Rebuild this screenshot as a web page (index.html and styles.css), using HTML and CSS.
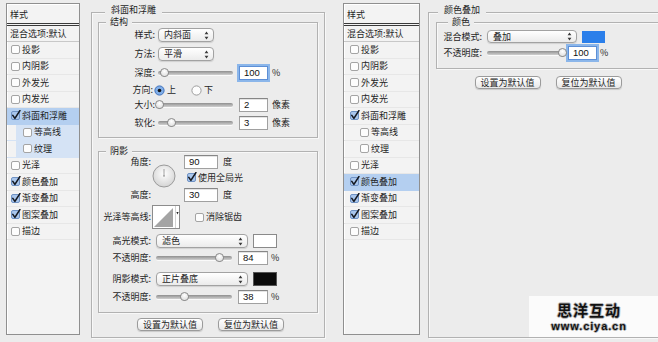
FILE: index.html
```html
<!DOCTYPE html>
<html>

<head>
    <meta charset="UTF-8">
    <link rel="stylesheet" href="styles.css">
    <title>图层样式</title>
</head>

<body>

    <!-- shared glyphs: checkboxes, radios, select arrows -->
    <svg class="defs" aria-hidden="true">
        <defs>
            <symbol id="cb-off" viewBox="0 0 11 11">
                <rect x="1.5" y="1.5" width="8" height="8" rx="1.5" fill="#fdfdfd" stroke="#a4a4a4" />
            </symbol>
            <symbol id="cb-on" viewBox="0 0 11 11">
                <rect x="1.5" y="1.5" width="8" height="8" rx="1.5" fill="#a9c6ec" stroke="#6f92c4" />
                <path d="M2.8 5.4 L4.9 8.4 L9.9 0.6" fill="none" stroke="#141820" stroke-width="1.6"
                    stroke-linecap="round" stroke-linejoin="round" />
            </symbol>
            <symbol id="radio-on" viewBox="0 0 11 11">
                <circle cx="5.5" cy="5.5" r="4.6" fill="#80aee8" stroke="#3e70bb" />
                <circle cx="5.5" cy="5.5" r="1.8" fill="#151515" />
            </symbol>
            <symbol id="radio-off" viewBox="0 0 11 11">
                <circle cx="5.5" cy="5.5" r="4.6" fill="#fdfdfd" stroke="#9d9d9d" />
            </symbol>
            <symbol id="updown" viewBox="0 0 5 9">
                <path d="M2.5 0.6 L4.4 3.3 H0.6 Z M2.5 8.4 L4.4 5.7 H0.6 Z" fill="#3a3a3a" />
            </symbol>
        </defs>
    </svg>

    <div class="window">

        <!-- left style list -->
        <div class="sidebar">
            <div class="side-head">样式</div>
            <div class="side-blend">混合选项:默认</div>
            <div class="side-row"><svg class="cb"><use href="#cb-off" /></svg>投影</div>
            <div class="side-row"><svg class="cb"><use href="#cb-off" /></svg>内阴影</div>
            <div class="side-row"><svg class="cb"><use href="#cb-off" /></svg>外发光</div>
            <div class="side-row"><svg class="cb"><use href="#cb-off" /></svg>内发光</div>
            <div class="side-row sel"><svg class="cb"><use href="#cb-on" /></svg>斜面和浮雕</div>
            <div class="side-row sub hl"><svg class="cb"><use href="#cb-off" /></svg>等高线</div>
            <div class="side-row sub hl"><svg class="cb"><use href="#cb-off" /></svg>纹理</div>
            <div class="side-row"><svg class="cb"><use href="#cb-off" /></svg>光泽</div>
            <div class="side-row"><svg class="cb"><use href="#cb-on" /></svg>颜色叠加</div>
            <div class="side-row"><svg class="cb"><use href="#cb-on" /></svg>渐变叠加</div>
            <div class="side-row"><svg class="cb"><use href="#cb-on" /></svg>图案叠加</div>
            <div class="side-row"><svg class="cb"><use href="#cb-off" /></svg>描边</div>
        </div>

        <!-- bevel and emboss -->
        <div class="panel">
            <div class="group outer">
                <div class="group-title">斜面和浮雕</div>

                <div class="group inner struct">
                    <div class="group-title">结构</div>
                    <div class="row r-style">
                        <span class="label">样式:</span>
                        <div class="select w56"><span>内斜面</span><svg class="arrows"><use href="#updown" /></svg></div>
                    </div>
                    <div class="row r-method">
                        <span class="label">方法:</span>
                        <div class="select w56"><span>平滑</span><svg class="arrows"><use href="#updown" /></svg></div>
                    </div>
                    <div class="row r-depth">
                        <span class="label">深度:</span>
                        <div class="slider"><span class="thumb" style="left: 9%"></span></div>
                        <span class="field focus">100</span>
                        <span class="unit">%</span>
                    </div>
                    <div class="row r-dir">
                        <span class="label">方向:</span>
                        <svg class="radio"><use href="#radio-on" /></svg>
                        <span class="radio-text">上</span>
                        <svg class="radio radio-gap"><use href="#radio-off" /></svg>
                        <span class="radio-text">下</span>
                    </div>
                    <div class="row r-size">
                        <span class="label">大小:</span>
                        <div class="slider"><span class="thumb" style="left: 2%"></span></div>
                        <span class="field">2</span>
                        <span class="unit">像素</span>
                    </div>
                    <div class="row r-soft">
                        <span class="label">软化:</span>
                        <div class="slider"><span class="thumb" style="left: 18%"></span></div>
                        <span class="field">3</span>
                        <span class="unit">像素</span>
                    </div>
                </div>

                <div class="group inner shade">
                    <div class="group-title">阴影</div>
                    <div class="angle">
                        <div class="angle-labels"><span>角度:</span><span>高度:</span></div>
                        <svg class="dial" viewBox="0 0 24 24">
                            <defs>
                                <radialGradient id="dialFill" cx="50%" cy="40%" r="60%">
                                    <stop offset="0" stop-color="#ffffff" />
                                    <stop offset="1" stop-color="#d4d4d4" />
                                </radialGradient>
                            </defs>
                            <circle cx="12" cy="12" r="11" fill="url(#dialFill)" stroke="#9a9a9a" />
                            <line x1="12" y1="12" x2="12" y2="5" stroke="#8a8a8a" stroke-width="0.8" />
                            <circle cx="12" cy="12" r="0.8" fill="#8a8a8a" />
                        </svg>
                        <div class="angle-fields">
                            <div class="row"><span class="field wide">90</span><span class="unit">度</span></div>
                            <div class="row check"><svg class="cb"><use href="#cb-on" /></svg>使用全局光</div>
                            <div class="row r-alt"><span class="field wide">30</span><span class="unit">度</span></div>
                        </div>
                    </div>
                    <div class="row r-contour">
                        <span class="label">光泽等高线:</span>
                        <svg class="contour" viewBox="0 0 28 24">
                            <rect x="0.5" y="0.5" width="27" height="23" fill="#fff" stroke="#8c8c8c" />
                            <path d="M2 22 L21 3 V22 Z" fill="#a4a4a4" />
                            <path d="M23.5 1 V23" stroke="#d2d2d2" />
                            <path d="M24.4 7 H26.6 L25.5 9.5 Z" fill="#222" />
                        </svg>
                        <svg class="cb cb-gap"><use href="#cb-off" /></svg>
                        <span>消除锯齿</span>
                    </div>
                    <div class="row r-mode">
                        <span class="label">高光模式:</span>
                        <div class="select w92"><span>滤色</span><svg class="arrows"><use href="#updown" /></svg></div>
                        <span class="swatch white"></span>
                    </div>
                    <div class="row r-op">
                        <span class="label">不透明度:</span>
                        <div class="slider"><span class="thumb" style="left: 84%"></span></div>
                        <span class="field">84</span>
                        <span class="unit">%</span>
                    </div>
                    <div class="row r-mode2">
                        <span class="label">阴影模式:</span>
                        <div class="select w92"><span>正片叠底</span><svg class="arrows"><use href="#updown" /></svg></div>
                        <span class="swatch black"></span>
                    </div>
                    <div class="row r-op2">
                        <span class="label">不透明度:</span>
                        <div class="slider"><span class="thumb" style="left: 38%"></span></div>
                        <span class="field">38</span>
                        <span class="unit">%</span>
                    </div>
                </div>

                <div class="buttons buttons-a">
                    <span class="btn">设置为默认值</span>
                    <span class="btn">复位为默认值</span>
                </div>
            </div>
        </div>

        <!-- second style list -->
        <div class="sidebar sidebar-b">
            <div class="side-head">样式</div>
            <div class="side-blend">混合选项:默认</div>
            <div class="side-row"><svg class="cb"><use href="#cb-off" /></svg>投影</div>
            <div class="side-row"><svg class="cb"><use href="#cb-off" /></svg>内阴影</div>
            <div class="side-row"><svg class="cb"><use href="#cb-off" /></svg>外发光</div>
            <div class="side-row"><svg class="cb"><use href="#cb-off" /></svg>内发光</div>
            <div class="side-row"><svg class="cb"><use href="#cb-on" /></svg>斜面和浮雕</div>
            <div class="side-row sub"><svg class="cb"><use href="#cb-off" /></svg>等高线</div>
            <div class="side-row sub"><svg class="cb"><use href="#cb-off" /></svg>纹理</div>
            <div class="side-row"><svg class="cb"><use href="#cb-off" /></svg>光泽</div>
            <div class="side-row sel"><svg class="cb"><use href="#cb-on" /></svg>颜色叠加</div>
            <div class="side-row"><svg class="cb"><use href="#cb-on" /></svg>渐变叠加</div>
            <div class="side-row"><svg class="cb"><use href="#cb-on" /></svg>图案叠加</div>
            <div class="side-row"><svg class="cb"><use href="#cb-off" /></svg>描边</div>
        </div>

        <!-- color overlay -->
        <div class="panel panel-b">
            <div class="group outer">
                <div class="group-title">颜色叠加</div>
                <div class="group inner color">
                    <div class="group-title">颜色</div>
                    <div class="row r-blend">
                        <span class="label">混合模式:</span>
                        <div class="select w90"><span>叠加</span><svg class="arrows"><use href="#updown" /></svg></div>
                        <span class="swatch blue"></span>
                    </div>
                    <div class="row r-cop">
                        <span class="label">不透明度:</span>
                        <div class="slider"><span class="thumb" style="left: 100%"></span></div>
                        <span class="field focus">100</span>
                        <span class="unit">%</span>
                    </div>
                </div>
                <div class="buttons buttons-b">
                    <span class="btn">设置为默认值</span>
                    <span class="btn">复位为默认值</span>
                </div>
            </div>
        </div>

    </div>

    <div class="watermark">
        <div class="wm-title">思洋互动</div>
        <div class="wm-url">www.ciya.cn</div>
    </div>

</body>

</html>
```

FILE: styles.css
```css
* {
    box-sizing: border-box;
}

body {
    margin: 0;
    width: 658px;
    height: 342px;
    overflow: hidden;
    position: relative;
    background: #ececec;
    color: #1f1f1f;
    font: 9px/14px "Noto Sans CJK SC", "Noto Sans CJK JP", sans-serif;
}

.defs {
    display: block;
    width: 0;
    height: 0;
    overflow: hidden;
}

.window {
    display: flex;
    align-items: flex-start;
    padding: 3px 0 0 6px;
}

/* style list */

.sidebar {
    flex: none;
    width: 74px;
    height: 332px;
    border: 1px solid #8f8f8f;
    background: #f3f3f3;
    box-shadow: inset 1px 1px 0 #fff;
}

.sidebar-b {
    width: 77px;
    margin-left: 18px;
}

.side-head {
    height: 22px;
    padding: 1px 0 0 3px;
    line-height: 19px;
    border-bottom: 3px double #3a3a3a;
}

.side-blend {
    height: 16px;
    padding-left: 3px;
    line-height: 15px;
    border-bottom: 1px solid #c8c8c8;
}

.side-row {
    height: 16.5px;
    display: flex;
    align-items: center;
    padding-left: 3px;
    border-bottom: 1px solid #e7e7e7;
}

.sidebar-b .side-row {
    padding-left: 5px;
}

.side-row.sub,
.sidebar-b .side-row.sub {
    padding-left: 15px;
}

.side-row.sel {
    background: #b4cff0;
    border-bottom-color: #b4cff0;
}

.side-row.hl {
    background: linear-gradient(90deg, transparent 9px, #d5e3f5 9px);
    border-bottom-color: #d5e3f5;
}

.cb {
    flex: none;
    width: 11px;
    height: 11px;
    margin-right: 1px;
}

/* group boxes */

.panel {
    flex: none;
    width: 234px;
    margin: 9px 0 0 11px;
}

.panel-b {
    width: 240px;
    margin-left: 8px;
}

.group {
    border: 1px solid #b2b2b2;
    box-shadow: inset 1px 1px 0 #f8f8f8, 1px 1px 0 #f8f8f8;
}

.outer {
    height: 326px;
}

.group-title {
    width: max-content;
    height: 11px;
    margin: -9px 0 0 13px;
    padding: 0 6px;
    background: #ececec;
    line-height: 11px;
}

.panel-b .outer > .group-title {
    margin-left: 9px;
}

.inner {
    margin: 7px 6px 0;
}

.inner > .group-title {
    margin-top: -7px;
    margin-left: 7px;
    padding: 0 4px;
}

.panel-b .inner {
    margin: 7px 6px 0 7px;
}

.panel-b .inner > .group-title {
    margin-left: 11px;
}

.struct {
    padding-bottom: 7px;
}

.shade {
    margin-top: 13px;
    padding-bottom: 8px;
}

.color {
    padding-bottom: 8px;
}

/* rows */

.row {
    display: flex;
    align-items: center;
    height: 14px;
    white-space: nowrap;
}

.label {
    flex: none;
    text-align: right;
    white-space: nowrap;
}

.struct .label {
    width: 56px;
    margin-right: 3px;
}

.shade .label {
    width: 52px;
    margin-right: 5px;
}

.color .label {
    width: 45px;
    margin-right: 5px;
}

.r-style {
    margin-top: 1px;
}

.r-method,
.r-depth {
    margin-top: 5px;
}

.r-dir {
    margin-top: 3px;
}

.r-dir .label {
    width: 54px;
    margin-right: 1px;
}

.r-size {
    margin-top: 1px;
}

.r-soft {
    margin-top: 4px;
}

.radio {
    flex: none;
    width: 11px;
    height: 11px;
}

.radio-text {
    margin-left: 2px;
}

.radio-gap {
    margin-left: 15px;
}

/* controls */

.select {
    flex: none;
    display: flex;
    align-items: center;
    justify-content: space-between;
    height: 14px;
    padding: 0 4px 0 5px;
    border: 1px solid #a2a2a2;
    border-radius: 4px;
    background: linear-gradient(#ffffff, #ebebeb);
    box-shadow: 0 1px 1px rgba(0, 0, 0, 0.12);
    line-height: 12px;
}

.w56 {
    width: 56px;
}

.w92 {
    width: 92px;
}

.w90 {
    width: 90px;
    height: 13px;
}

.arrows {
    width: 5px;
    height: 9px;
}

.slider {
    position: relative;
    flex: none;
    width: 75px;
    height: 4px;
    border-radius: 2px;
    background: linear-gradient(#8f8f8f, #d0d0d0);
    box-shadow: 0 1px 0 #fafafa;
}

.shade .slider {
    width: 76px;
}

.thumb {
    position: absolute;
    top: -3px;
    width: 9px;
    height: 9px;
    margin-left: -4.5px;
    border: 1px solid #8a8a8a;
    border-radius: 50% 50% 45% 45%;
    background: radial-gradient(circle at 50% 35%, #ffffff, #d8d8d8);
}

.field {
    flex: none;
    width: 29px;
    height: 14px;
    margin-left: 6px;
    padding-left: 4px;
    border: 1px solid #a0a0a0;
    border-top-color: #868686;
    background: #fff;
    box-shadow: inset 0 1px 0 #e4e4e4;
    color: #111;
    font: 9.5px/12px "Liberation Sans", Arial, sans-serif;
}

.shade .field {
    width: 30px;
}

.field.focus {
    border-color: #5d8fd6;
    box-shadow: 0 0 0 2px #8bb6ea;
}

.unit {
    margin-left: 4px;
}

.shade .unit,
.color .unit {
    margin-left: 3px;
}

.swatch {
    flex: none;
    width: 24px;
    height: 14px;
    margin-left: 5px;
    border: 1px solid #8a8a8a;
}

.swatch.white {
    background: #fff;
}

.swatch.black {
    background: #0b0b0b;
    border-color: #555;
}

.swatch.blue {
    width: 23px;
    height: 12px;
    background: #2b7fea;
    border-color: #2b7fea;
}

/* shadow group */

.angle {
    display: flex;
    height: 47px;
    margin-top: -1px;
}

.angle-labels {
    width: 52px;
    display: flex;
    flex-direction: column;
    justify-content: space-between;
    text-align: right;
}

.dial {
    flex: none;
    width: 24px;
    height: 24px;
    margin: 9px 0 0 1px;
}

.angle-fields {
    margin-left: 8px;
}

.angle-fields .field {
    margin-left: 0;
}

.field.wide {
    width: 34px;
}

.angle-fields .unit {
    margin-left: 5px;
}

.angle-fields .check {
    height: 13px;
    margin-top: 2px;
    padding-left: 2px;
}

.r-alt {
    margin-top: 4px;
}

.r-contour {
    height: 24px;
    margin-top: 3px;
}

.r-contour .label {
    margin-right: 1px;
}

.contour {
    flex: none;
    width: 28px;
    height: 24px;
}

.cb-gap {
    margin-left: 14px;
}

.r-mode {
    margin-top: 5px;
}

.r-op {
    margin-top: 3px;
}

.r-mode2 {
    margin-top: 7px;
}

.r-op2 {
    margin-top: 4px;
}

.r-blend {
    height: 13px;
    margin-top: 3px;
}

.r-cop {
    margin-top: 3px;
}

/* buttons */

.buttons {
    display: flex;
    justify-content: center;
    gap: 15px;
}

.buttons-a {
    margin-top: 5px;
    padding-left: 5px;
}

.buttons-b {
    margin-top: 7px;
}

.btn {
    width: 66px;
    height: 13px;
    border: 1px solid #9b9b9b;
    border-radius: 4px;
    background: linear-gradient(#ffffff, #e8e8e8);
    box-shadow: 0 1px 1px rgba(0, 0, 0, 0.15);
    text-align: center;
    line-height: 11px;
}

/* site watermark over the corner */

.watermark {
    position: absolute;
    left: 529px;
    top: 296px;
    width: 129px;
    height: 41px;
    padding: 6px 9px 0 0;
    background: #fbfbfb;
    display: flex;
    flex-direction: column;
    align-items: center;
    color: #111;
}

.wm-title {
    font: bold 15px/16px "Noto Sans CJK SC", sans-serif;
    letter-spacing: 1px;
    text-shadow: 1px 0 #b5b5b5, -1px 0 #b5b5b5, 0 1px #b5b5b5, 0 -1px #b5b5b5;
}

.wm-url {
    margin-top: 2px;
    font: bold 11px/12px "Liberation Sans", Arial, sans-serif;
    letter-spacing: 0.9px;
    text-shadow: 1px 0 #b5b5b5, -1px 0 #b5b5b5, 0 1px #b5b5b5, 0 -1px #b5b5b5;
}
```
